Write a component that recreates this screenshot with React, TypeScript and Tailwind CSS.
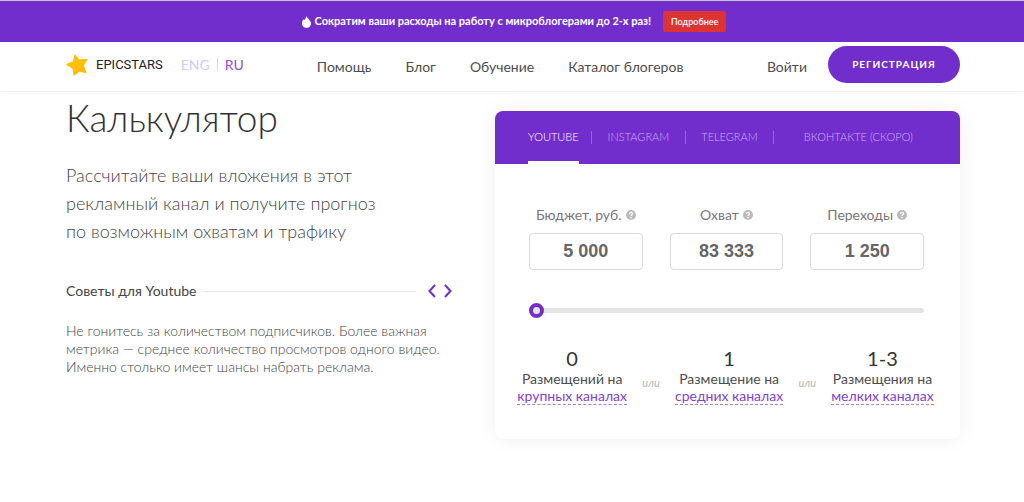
import { useState } from "react";

const NAV = ["Помощь", "Блог", "Обучение", "Каталог блогеров"];

const TABS = [
  { label: "YOUTUBE", className: "mr-3" },
  { label: "INSTAGRAM", className: "mx-4" },
  { label: "TELEGRAM", className: "mx-[15px]" },
  { label: "ВКОНТАКТЕ (СКОРО)", className: "ml-[30px]" },
];

const FIELDS = [
  { id: "budget", label: "Бюджет, руб.", value: "5 000" },
  { id: "reach", label: "Охват", value: "83 333" },
  { id: "clicks", label: "Переходы", value: "1 250" },
];

const PLACEMENTS = [
  { count: "0", label: "Размещений на", link: "крупных каналах" },
  { count: "1", label: "Размещение на", link: "средних каналах" },
  { count: "1-3", label: "Размещения на", link: "мелких каналах" },
];

function StarLogo() {
  return (
    <svg width="22" height="22" viewBox="0 0 22 22" aria-hidden="true">
      <path
        d="M9 1.200 12.800 6.200 20.800 5.400 17 11.600 19.800 18.600 13.200 16.800 8.200 21 7.200 14.400 1 10.400 7.600 8z"
        fill="#ffc107"
        stroke="#ffc107"
        strokeWidth="1.400"
        strokeLinejoin="round"
      />
      <path d="m17 11.600 2.800 7-6.600-1.800-5 4.200-.6-3 6.200-3z" fill="#fdb400" opacity=".7" />
    </svg>
  );
}

function Flame() {
  return (
    <svg width="9" height="12" viewBox="0 0 9 12" aria-hidden="true">
      <path
        d="M4.200 0C4.800 1.600 6 2.200 6.700 3.200 8.200 4.800 9 6 9 7.600 9 10.200 7 12 4.500 12S0 10.200 0 7.600C0 5.800.6 4.400 1.600 3.200l.9.800C3.400 2.800 4 1.600 4.200 0z"
        fill="#fff"
      />
    </svg>
  );
}

function Hint() {
  return (
    <svg width="10" height="10" viewBox="0 0 10 10" aria-hidden="true">
      <circle cx="5" cy="5" r="5" fill="#bbb" />
      <path d="M3.500 4c0-2 3-2 3-.2C6.500 4.700 5 4.800 5 6" fill="none" stroke="#fff" strokeWidth="1.200" />
      <circle cx="5" cy="7.600" r=".8" fill="#fff" />
    </svg>
  );
}

function Banner() {
  return (
    <div className="flex h-[42px] items-center justify-center border-t border-[#c9c6d4] bg-[#722ecc] pl-1 text-white">
      <Flame />
      <p className="ml-1 text-[11px] font-bold">
        Сократим ваши расходы на работу с микроблогерами до 2-х раз!
      </p>
      <a href="#more" className="ml-3 rounded-xs bg-[#dd3333] px-2 text-[9px] leading-[21px] font-semibold">
        Подробнее
      </a>
    </div>
  );
}

function Header() {
  return (
    <header className="flex h-[50px] items-center border-b border-[#f1f1f1] pr-16 pl-[66px] shadow-[0_1px_3px_rgba(0,0,0,0.04)]">
      <div className="mb-1 flex items-center">
        <a href="#home" className="flex items-center gap-2 font-[Roboto] text-[13px] text-[#222]">
          <StarLogo />
          EPICSTARS
        </a>
        <div className="ml-[18px] flex items-center text-[14px]">
          <a href="#eng" className="text-[#cfcaff]">ENG</a>
          <span className="mx-[7px] h-[13px] w-px bg-[#d9d4f5]" />
          <a href="#ru" className="text-[#8c4fd8]">RU</a>
        </div>
      </div>
      <nav className="ml-[73px] flex gap-[34px] text-[14px] text-[#4d4d4d]">
        {NAV.map((item) => (
          <a key={item} href="#nav">{item}</a>
        ))}
      </nav>
      <a href="#login" className="ml-auto text-[14px] text-[#4d4d4d]">Войти</a>
      <button className="mb-[5px] ml-[21px] h-[37px] w-[132px] rounded-full bg-[#722ecc] text-[10px] font-bold tracking-widest text-white">
        РЕГИСТРАЦИЯ
      </button>
    </header>
  );
}

function Intro() {
  return (
    <section className="w-[386px]">
      <h1 className="mt-[3px] text-[37px] leading-[46px] font-light text-[#333]">Калькулятор</h1>
      <p className="mt-5 text-[18px] leading-[28px] font-light text-[#444]">
        Рассчитайте ваши вложения в этот
        <br />
        рекламный канал и получите прогноз
        <br />
        по возможным охватам и трафику
      </p>
      <div className="mt-[37px] flex items-center">
        <h2 className="text-[14px] leading-[18px] text-[#444]">Советы для Youtube</h2>
        <span className="mr-3 ml-[7px] h-px flex-1 bg-[#e6e6e6]" />
        <div className="flex gap-2 text-[#722ecc]">
          <button aria-label="Предыдущий совет">
            <svg width="8" height="14" viewBox="0 0 8 14" fill="none" stroke="currentColor" strokeWidth="2">
              <path d="M7 1 1.500 7 7 13" />
            </svg>
          </button>
          <button aria-label="Следующий совет">
            <svg width="8" height="14" viewBox="0 0 8 14" fill="none" stroke="currentColor" strokeWidth="2">
              <path d="m1 1 5.500 6L1 13" />
            </svg>
          </button>
        </div>
      </div>
      <p className="mt-[22px] text-[14px] leading-[18px] font-light text-[#444]">
        Не гонитесь за количеством подписчиков. Более важная
        <br />
        метрика — среднее количество просмотров одного видео.
        <br />
        Именно столько имеет шансы набрать реклама.
      </p>
    </section>
  );
}

function Calculator() {
  const [tab, setTab] = useState("YOUTUBE");
  const [level, setLevel] = useState(0);

  return (
    <section className="mt-[19px] ml-[43px] flex-1 self-start rounded-lg bg-white shadow-[0_0_22px_rgba(0,0,0,0.06)]">
      <div className="flex h-[53px] items-center rounded-t-lg bg-[#722ecc] pl-[33px] text-[11px] font-light">
        {TABS.map((item, i) => (
          <div key={item.label} className="flex h-full items-center">
            {i > 0 && <span className="h-[13px] w-px bg-[#9663da]" />}
            <button
              onClick={() => setTab(item.label)}
              className={`h-full border-y-3 border-t-transparent ${item.className} ${
                tab === item.label ? "border-b-white text-white" : "border-b-transparent text-[#c9b0ef]"
              }`}
            >
              {item.label}
            </button>
          </div>
        ))}
      </div>
      <div className="pt-[42px] pr-9 pl-[34px]">
        <div className="grid grid-cols-3 gap-[27px]">
          {FIELDS.map((field) => (
            <div key={field.id}>
              <label htmlFor={field.id} className="flex items-center justify-center gap-1 text-[14px] leading-[18px] text-[#777]">
                {field.label}
                <Hint />
              </label>
              <input
                id={field.id}
                defaultValue={field.value}
                className="mt-[9px] h-[37px] w-full rounded-sm border border-[#d9d9d9] text-center font-['Liberation_Sans'] text-[18px] font-bold text-[#666]"
              />
            </div>
          ))}
        </div>
        <input
          type="range"
          min={0}
          max={100}
          value={level}
          onChange={(e) => setLevel(Number(e.target.value))}
          aria-label="Бюджет"
          className="mt-8 block h-4 w-full appearance-none bg-transparent [&::-webkit-slider-runnable-track]:h-[5px] [&::-webkit-slider-runnable-track]:rounded-full [&::-webkit-slider-runnable-track]:bg-[#e4e4e4] [&::-webkit-slider-thumb]:mt-[-5px] [&::-webkit-slider-thumb]:size-[15px] [&::-webkit-slider-thumb]:appearance-none [&::-webkit-slider-thumb]:rounded-full [&::-webkit-slider-thumb]:border-4 [&::-webkit-slider-thumb]:border-[#722ecc] [&::-webkit-slider-thumb]:bg-[#e4e4e4]"
        />
      </div>
      <div className="flex justify-center pt-[29px] pr-3 pb-[34px] pl-2">
        {PLACEMENTS.map((item, i) => (
          <div key={item.link} className="flex">
            {i > 0 && <span className="w-12 pt-7 text-center text-[11px] text-[#b5b5b5] italic">или</span>}
            <div className="flex flex-col items-center text-[14px] leading-[17px] text-[#4d4d4d]">
              <span className="text-[20px] leading-[23px] text-[#333]">{item.count}</span>
              <span>{item.label}</span>
              <a href="#channels" className="border-b border-dashed border-[#a67fe0] text-[#8043d1]">
                {item.link}
              </a>
            </div>
          </div>
        ))}
      </div>
    </section>
  );
}

export default function App() {
  return (
    <div className="min-h-screen bg-white font-[Lato,sans-serif]">
      <Banner />
      <Header />
      <main className="flex pr-16 pl-[66px]">
        <Intro />
        <Calculator />
      </main>
    </div>
  );
}
